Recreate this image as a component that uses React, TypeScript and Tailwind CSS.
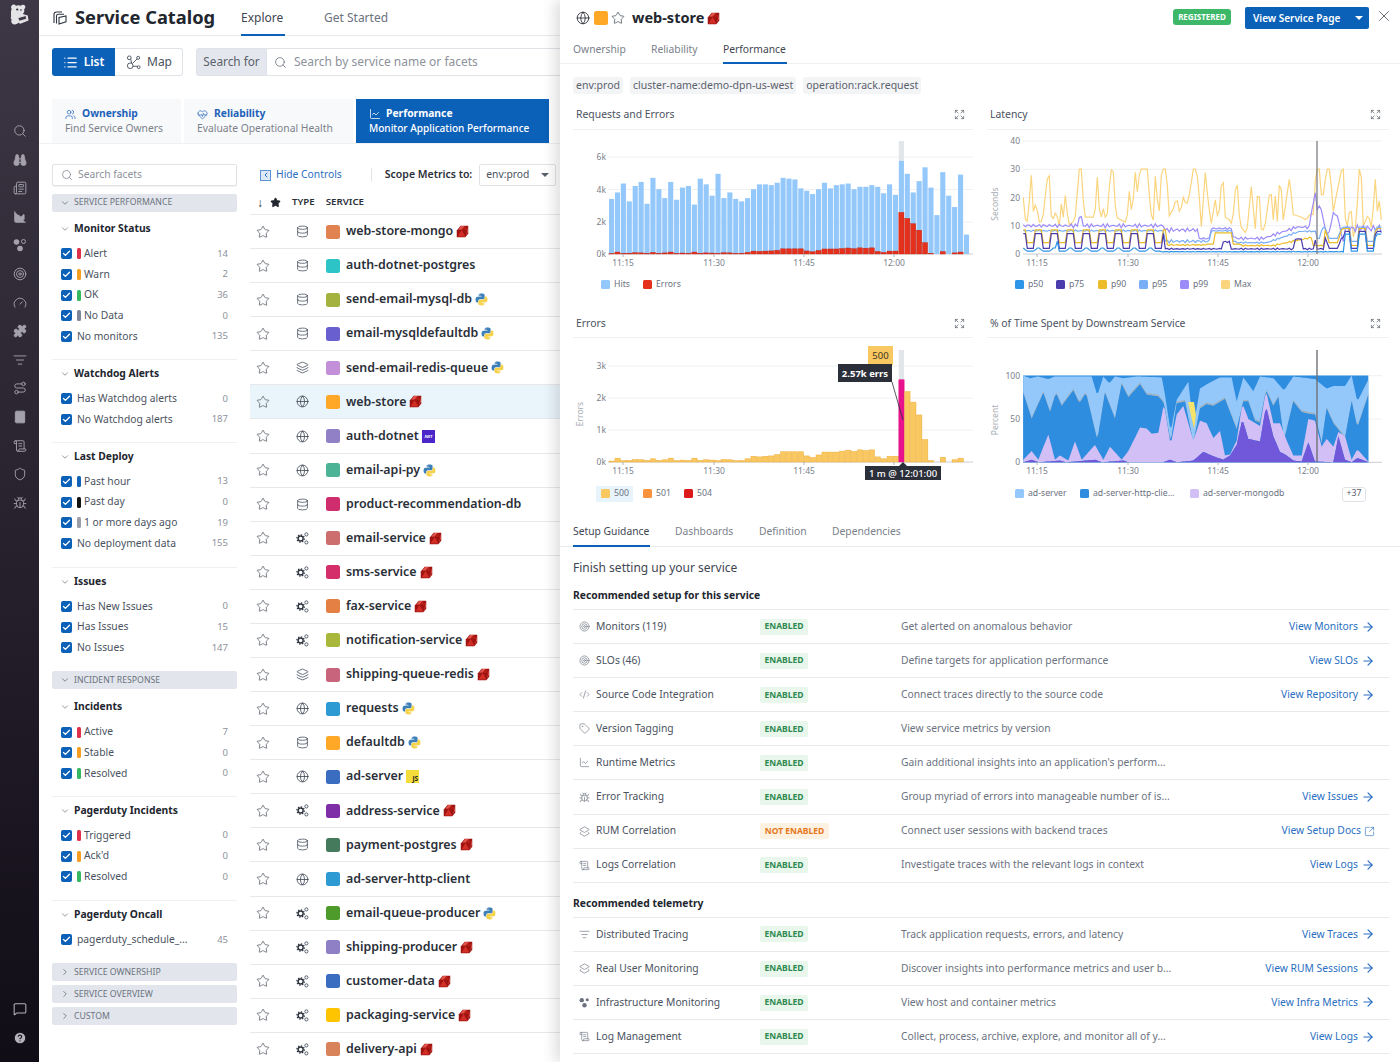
import React from "react";
import {
  Star, Database, Globe, Layers, Search, Check, ChevronDown, ChevronRight, List, ArrowRight,
  SquareArrowOutUpRight, X, Expand, Binoculars, ChartArea, Target, Gauge, Puzzle, ListFilter, Route,
  Book, Shield, Bug, MessageSquare, CircleHelp, ChartLine, CodeXml, Tag, Users, HeartPulse, Newspaper, ScrollText, Layers2,
} from "lucide-react";

const Ruby = () => (
  <svg viewBox="0 0 14 14" className="w-[13px] h-[13px] shrink-0">
    <polygon points="5,.8 13.200,.8 13.200,9.500 10,13.200 .8,13.200 .8,6" fill="#9f1410" />
    <polygon points="5.200,1.200 9.500,1.200 6.200,4.800 2.500,5.200" fill="#e0544c" />
    <polygon points="6.200,4.800 9.500,1.200 12.800,5.800" fill="#b51c16" />
    <polygon points="1.800,12.500 6,5.500 10,12.500" fill="#d22e26" />
    <polygon points="10.800,12 12.800,7 12.800,2" fill="#e46a62" opacity=".8" />
  </svg>
);
const Py = () => (
  <svg viewBox="0 0 24 24" className="w-[13px] h-[13px] shrink-0">
    <path fill="#3d7fb8" d="M11.9 1C6.5 1 6.8 3.4 6.8 3.4V6h5.3v.8H4.7S1 6.3 1 12s3.2 5.5 3.2 5.5h1.9v-2.7s-.1-3.2 3.2-3.2h5.4s3 0 3-3V4s.5-3-5.8-3zM9 2.7a1 1 0 110 2 1 1 0 010-2z" />
    <path fill="#f5d24a" transform="rotate(180 12 12)" d="M11.9 1C6.5 1 6.8 3.4 6.8 3.4V6h5.3v.8H4.7S1 6.3 1 12s3.2 5.5 3.2 5.5h1.9v-2.7s-.1-3.2 3.2-3.2h5.4s3 0 3-3V4s.5-3-5.8-3zM9 2.7a1 1 0 110 2 1 1 0 010-2z" />
  </svg>
);
const Js = () => (
  <span className="w-[13px] h-[13px] bg-[#f4dc3a] flex items-end justify-end pr-[1px] text-[6.5px] leading-[8px] font-bold text-[#222]">JS</span>
);
const Net = () => (
  <span className="w-[13px] h-[13px] bg-[#4b26c9] flex items-center justify-center text-[4px] leading-[5px] font-bold text-white">.NET</span>
);
const ServiceIcon = () => (
  <svg viewBox="0 0 14 14" className="w-[13px] h-[13px]" fill="none">
    <circle cx="5" cy="7" r="2.7" stroke="#2f3540" strokeWidth="1.5" />
    <circle cx="5" cy="7" r="4" stroke="#2f3540" strokeWidth="1.4" strokeDasharray="1.4 1.7" />
    <circle cx="11.2" cy="2.6" r="1.7" stroke="#4b5563" strokeWidth="1" />
    <circle cx="11.2" cy="11.2" r="1.7" stroke="#4b5563" strokeWidth="1" />
  </svg>
);
const TypeIcon = ({ t }: { t: string }) => {
  if (t === "db") return <Database className="w-[13px] h-[13px] text-[#4b5563]" strokeWidth={1.5} />;
  if (t === "web") return <Globe className="w-[13px] h-[13px] text-[#3f4652]" strokeWidth={1.5} />;
  if (t === "queue") return <Layers className="w-[13px] h-[13px] text-[#4b5563]" strokeWidth={1.5} />;
  return <ServiceIcon />;
};

const services: [string, string, string, string][] = [
  ["web-store-mongo", "ruby", "#e08350", "db"],
  ["auth-dotnet-postgres", "", "#2cc4c6", "db"],
  ["send-email-mysql-db", "py", "#a4b33f", "db"],
  ["email-mysqldefaultdb", "py", "#6a5fcf", "db"],
  ["send-email-redis-queue", "py", "#c28fd8", "queue"],
  ["web-store", "ruby", "#ffa726", "web"],
  ["auth-dotnet", "net", "#9180c5", "web"],
  ["email-api-py", "py", "#4cb396", "web"],
  ["product-recommendation-db", "", "#cf2d6d", "db"],
  ["email-service", "ruby", "#cc6e6e", "svc"],
  ["sms-service", "ruby", "#d42f6a", "svc"],
  ["fax-service", "ruby", "#e48044", "svc"],
  ["notification-service", "ruby", "#a9b73a", "svc"],
  ["shipping-queue-redis", "ruby", "#c8647c", "queue"],
  ["requests", "py", "#2e9ad4", "web"],
  ["defaultdb", "py", "#ffa726", "db"],
  ["ad-server", "js", "#3a6cbf", "web"],
  ["address-service", "ruby", "#7e2fa8", "svc"],
  ["payment-postgres", "ruby", "#467a5d", "db"],
  ["ad-server-http-client", "", "#2e9ad4", "web"],
  ["email-queue-producer", "py", "#4e9a2a", "svc"],
  ["shipping-producer", "ruby", "#8f7fc5", "svc"],
  ["customer-data", "ruby", "#3a6cbf", "svc"],
  ["packaging-service", "ruby", "#ffc400", "svc"],
  ["delivery-api", "ruby", "#d9835a", "svc"],
];

const Lang = ({ l }: { l: string }) =>
  l === "ruby" ? <Ruby /> : l === "py" ? <Py /> : l === "js" ? <Js /> : l === "net" ? <Net /> : null;

const R = "#e0314b", O = "#f59e1f", G = "#35b85f", S = "#7f8699", B = "#0f62b8", K = "#111", E = "#9a9ea6";
type F = [string, string, string | null];
const Cb = () => (
  <span className="w-[11px] h-[11px] rounded-[2px] bg-[#0b60b8] flex items-center justify-center shrink-0">
    <Check className="w-[9px] h-[9px] text-white" strokeWidth={3.5} />
  </span>
);
const FacetRow = ({ f }: { f: F }) => (
  <div className="h-[20.6px] flex items-center pl-[9px] pr-[9px]">
    <Cb />
    {f[2] ? (
      <span className="w-[3.5px] h-[11px] rounded-[1.5px] ml-[5px] mr-[3.5px] shrink-0" style={{ background: f[2] }} />
    ) : (
      <span className="w-[5px]" />
    )}
    <span className="text-[#4a5260]">{f[0]}</span>
    <span className="ml-auto text-[9.5px] text-[#8d929b]">{f[1]}</span>
  </div>
);
const Group = ({ title, rows, border = true, first = false, pb = "pb-[13px]", pt = "pt-[4px]" }: { title: string; rows: F[]; border?: boolean; first?: boolean; pb?: string; pt?: string }) => (
  <div className={`${first ? "pt-[7px]" : pt} ${border ? `${pb} border-b border-[#eef0f2]` : ""}`}>
    <div className="h-[20px] flex items-center pl-[8px] font-bold text-[#22262e]">
      <ChevronDown className="w-[10px] h-[10px] text-[#5b616c] mr-[4px]" strokeWidth={1.5} />
      {title}
    </div>
    <div className="mt-[4.7px]">
      {rows.map((r) => (
        <FacetRow key={r[0]} f={r} />
      ))}
    </div>
  </div>
);
const SecBar = ({ title, open, cls = "" }: { title: string; open?: boolean; cls?: string }) => (
  <div className={`h-[18px] rounded-[2px] bg-[#e2e6ec] flex items-center pl-[8px] text-[8.7px] text-[#6b7280] ${cls}`}>
    {open ? (
      <ChevronDown className="w-[10px] h-[10px] mr-[4px] text-[#6b7280]" />
    ) : (
      <ChevronRight className="w-[10px] h-[10px] mr-[4px] text-[#6b7280]" />
    )}
    {title}
  </div>
);

const Facets = () => (
  <div className="w-[185px] shrink-0 pt-[20px] text-[10.3px]">
    <div className="h-[22px] rounded-[2px] border border-[#dfe2e7] flex items-center pl-[8px] text-[#8d929b] shadow-[0_1px_1px_rgba(0,0,0,0.05)]">
      <Search className="w-[12px] h-[12px] mr-[5px] text-[#7c828c]" strokeWidth={1.5} />
      Search facets
    </div>
    <SecBar title="SERVICE PERFORMANCE" open cls="mt-[8px]" />
    <Group first title="Monitor Status" pb="pb-[12px]" rows={[["Alert", "14", R], ["Warn", "2", O], ["OK", "36", G], ["No Data", "0", S], ["No monitors", "135", null]]} />
    <Group title="Watchdog Alerts" pb="pb-[12px]" rows={[["Has Watchdog alerts", "0", null], ["No Watchdog alerts", "187", null]]} />
    <Group title="Last Deploy" rows={[["Past hour", "13", B], ["Past day", "0", K], ["1 or more days ago", "19", E], ["No deployment data", "155", null]]} />
    <Group title="Issues" border={false} rows={[["Has New Issues", "0", null], ["Has Issues", "15", null], ["No Issues", "147", null]]} />
    <SecBar title="INCIDENT RESPONSE" open cls="mt-[13px]" />
    <Group title="Incidents" pt="pt-[8px]" pb="pb-[12px]" rows={[["Active", "7", R], ["Stable", "0", O], ["Resolved", "0", G]]} />
    <Group title="Pagerduty Incidents" rows={[["Triggered", "0", R], ["Ack'd", "0", O], ["Resolved ", "0", G]]} />
    <Group title="Pagerduty Oncall" border={false} rows={[["pagerduty_schedule_...", "45", null]]} />
    <SecBar title="SERVICE OWNERSHIP" cls="mt-[13px]" />
    <SecBar title="SERVICE OVERVIEW" cls="mt-[4px]" />
    <SecBar title="CUSTOM" cls="mt-[4px]" />
  </div>
);

const Table = () => (
  <div className="flex-1 pt-[20px] min-w-0">
    <div className="h-[22px] flex items-center text-[10.3px] pl-[10px] whitespace-nowrap">
      <span className="w-[11px] h-[11px] border border-[#5b93d6] bg-[#dce9f7] flex items-center justify-center mr-[5px] shrink-0">
        <ChevronRight className="w-[8px] h-[8px] rotate-180 text-[#2a6fc2]" strokeWidth={3} />
      </span>
      <span className="text-[#2a6fc2]">Hide Controls</span>
      <span className="w-px h-[14px] bg-[#e2e5ea] ml-[29px] mr-[13px] shrink-0" />
      <span className="font-semibold text-[#2a2f38] text-[10.5px]">Scope Metrics to:</span>
      <span className="ml-[7px] w-[77px] h-[22px] rounded-[2px] border border-[#dfe2e7] flex items-center pl-[6px] text-[#4a5260] shrink-0">
        env:prod
        <span className="ml-auto mr-[6px] w-0 h-0 border-x-[4px] border-x-transparent border-t-[4px] border-t-[#5b616c]" />
      </span>
    </div>
    <div className="h-[29px] pt-[5px] flex items-center text-[9.7px] font-semibold text-[#2a2f38] pl-[7px] border-b border-[#e6e8eb]">
      <span className="w-[11px] text-[12px] leading-none">↓</span>
      <Star className="w-[11px] h-[11px] fill-[#22262e] text-[#22262e] ml-[2px]" />
      <span className="ml-[11px]">TYPE</span>
      <span className="ml-[11px]">SERVICE</span>
    </div>
    <div>
      {services.map((s, i) => (
        <div key={s[0]} className={`h-[34.08px] flex items-center border-b border-[#e6e8eb] ${i === 5 ? "bg-[#eaf5fb]" : ""}`}>
          <Star className="w-[14px] h-[14px] ml-[6px] text-[#555b66] shrink-0" strokeWidth={1.3} />
          <span className="w-[13px] ml-[26px] flex justify-center shrink-0">
            <TypeIcon t={s[3]} />
          </span>
          <span className="w-[14px] h-[14px] rounded-[2.5px] ml-[17px] shrink-0" style={{ background: s[2] }} />
          <span className="ml-[6px] text-[12.4px] font-semibold text-[#2a2f38] whitespace-nowrap">{s[0]}</span>
          <span className="ml-[3px]">
            <Lang l={s[1]} />
          </span>
        </div>
      ))}
    </div>
  </div>
);

const Tile = ({ icon, t, d, active, w }: { icon: React.ReactNode; t: string; d: string; active?: boolean; w: string }) => (
  <div className={`${w} h-[44px] pl-[13px] flex flex-col justify-center text-[10.3px] leading-[15px] whitespace-nowrap ${active ? "bg-[#0b60b8] text-white" : "bg-[#f8f9fa]"}`}>
    <div className={`flex items-center font-bold ${active ? "text-white" : "text-[#1c62b9]"}`}>
      <span className="w-[17px] flex">{icon}</span>
      {t}
    </div>
    <div className={active ? "font-medium text-[10.05px]" : "text-[#7b818b]"}>{d}</div>
  </div>
);

const Main = () => (
  <div className="flex-1 min-w-0">
    <div className="h-[36px] border-b border-[#e8eaed] flex items-stretch pl-[13px]">
      <div className="flex items-center w-[189px]">
        <svg viewBox="0 0 16 16" className="w-[16px] h-[16px] mr-[7px]" fill="none" stroke="#2f3540" strokeWidth="1.1">
          <path d="M2 13V4.5C2 3 3 2 4.5 2H10M4.5 13.5V6C4.5 5 5.2 4.2 6.2 4.2H12" />
          <path d="M7 14V7.5L14 6V11.8Z" />
        </svg>
        <span className="text-[18.3px] font-bold text-[#22262e] leading-none whitespace-nowrap">Service Catalog</span>
      </div>
      <div className="w-[83px] relative flex items-center text-[12px] text-[#3f4652]">
        Explore
        <span className="absolute left-0 bottom-[-1px] h-[2px] w-[44px] bg-[#0b60b8]" />
      </div>
      <div className="flex items-center text-[12px] text-[#6b7280]">Get Started</div>
    </div>
    <div className="mt-[12px] ml-[13px] h-[28px] flex">
      <div className="w-[63px] bg-[#0b60b8] rounded-l-[3px] flex items-center justify-center text-white text-[12px] font-semibold">
        <List className="w-[15px] h-[15px] mr-[6px]" strokeWidth={2} />
        List
      </div>
      <div className="w-[68px] border border-l-0 border-[#dfe2e7] rounded-r-[3px] flex items-center pl-[11px] text-[#4a5260] text-[12px]">
        <svg viewBox="0 0 16 16" className="w-[15px] h-[15px] mr-[6px]" fill="none" stroke="#4a5260" strokeWidth="1">
          <circle cx="3.5" cy="3" r="2" />
          <circle cx="4.5" cy="11.5" r="3" />
          <circle cx="13" cy="3" r="1.6" />
          <circle cx="13.5" cy="13" r="1.5" />
          <path d="M5 4.5l1 4M7 9l5-5M7.5 12h4.5" />
        </svg>
        Map
      </div>
      <div className="ml-[13px] w-[71px] bg-[#e4e8ee] border border-[#dfe2e7] rounded-l-[3px] flex items-center justify-center text-[11.8px] text-[#5b616c]">
        Search for
      </div>
      <div className="flex-1 border-y border-[#dfe2e7] flex items-center pl-[7px] text-[12px] text-[#8d929b] whitespace-nowrap overflow-hidden">
        <Search className="w-[13px] h-[13px] mr-[7px] text-[#6b7280]" strokeWidth={1.5} />
        Search by service name or facets
      </div>
    </div>
    <div className="mt-[23px] pl-[13px] flex gap-[3px] h-[45px] border-b border-[#f0f1f3]">
      <Tile w="w-[129px]" t="Ownership" d="Find Service Owners" icon={<Users className="w-[11px] h-[11px] mt-[1px]" strokeWidth={1.5} />} />
      <Tile w="w-[169px]" t="Reliability" d="Evaluate Operational Health" icon={<HeartPulse className="w-[11px] h-[11px] mt-[1px]" strokeWidth={1.5} />} />
      <Tile active w="w-[193px]" t="Performance" d="Monitor Application Performance" icon={<ChartLine className="w-[12px] h-[12px]" strokeWidth={1.5} />} />
    </div>
    <div className="flex pl-[13px] gap-[13px]">
      <Facets />
      <Table />
    </div>
  </div>
);

const sideTop = [Search, Binoculars, Newspaper, ChartArea, null, Target, Gauge, Puzzle, ListFilter, Route, Book, ScrollText, Shield, Bug];
const fillSet = new Set<unknown>([Binoculars, ChartArea, Puzzle, Book]);
const Side = () => (
  <div className="w-[39px] h-full shrink-0 bg-linear-to-b from-[#3e3846] to-[#110d17] flex flex-col items-center pb-[10px]">
    <div className="h-[116.7px] w-full pt-[3px] flex justify-center shrink-0">
      <svg viewBox="0 0 24 26" className="w-[22px] h-[24px]">
        <path fill="#e4e4e6" d="M3 2.500c1.500-1.500 3.500-1 4.500.5 2-.8 4-.8 5.500 0 1-1.500 3.500-1.500 4.500 0 .8 1.500 0 3-1 3.800.5 2 0 4-1.500 5.200l5.500 1.500.8 5.500-9 3.500-2-1c-2 2-5 2.500-6.500 1-1.500-1-1.800-3-.8-4.500-1-.8-1.500-2.500-.7-3.500C2 11 2 8 3 6.500 2 5 2 3.500 3 2.500z" />
        <circle cx="9" cy="7" r="1.200" fill="#2a2530" />
        <circle cx="13" cy="7.500" r=".9" fill="#2a2530" />
        <path d="M9.500 16l9-2.500.7 4-8 2.300z" fill="#3e3846" stroke="#e4e4e6" />
      </svg>
    </div>
    {sideTop.map((I, i) => (
      <div key={i} className="h-[28.6px] flex items-center justify-center text-[#a5a1ac] shrink-0">
        {I ? (
          <I className={`w-[14px] h-[14px] ${fillSet.has(I) ? "fill-current" : ""}`} strokeWidth={1.6} />
        ) : (
          <svg viewBox="0 0 14 14" className="w-[14px] h-[14px] fill-current">
            <circle cx="3.500" cy="4" r="2.800" />
            <circle cx="10.500" cy="3.500" r="2" fill="none" stroke="currentColor" />
            <circle cx="7" cy="10.500" r="2.800" />
          </svg>
        )}
      </div>
    ))}
    <div className="mt-auto h-[28.6px] flex items-center justify-center text-[#b5b2ba]">
      <MessageSquare className="w-[14px] h-[14px]" strokeWidth={1.8} />
    </div>
    <div className="h-[28.6px] flex items-center justify-center text-[#b5b2ba]">
      <CircleHelp className="w-[14px] h-[14px] fill-current stroke-[#1a1520]" strokeWidth={2} />
    </div>
  </div>
);

/* ---------- charts ---------- */
const hits = [3.4,3.8,4.35,3.25,4.2,4.45,3.1,4.7,4,3.45,4.45,3.35,4.1,4.2,3.05,4.65,4.3,3.6,4.95,3.45,3.8,3.4,3.25,3.45,4,4.3,4.3,4.25,4.4,4.7,4.65,4.6,4.05,3.9,3.7,4,4.4,4.05,4.25,4.3,4.35,4,4.15,4.15,4.25,4.15,3.75,4.3,3.65,5.75,4.95,3.8,4.5,5.35,4.1,2.4,5.05,3.6,2.9,4.9,1.2];
const errs = [.03,.12,.04,.05,.08,.07,.05,.1,.05,.07,.12,.04,.06,.05,.12,.05,.07,.06,.04,.08,.07,.04,.05,.1,.18,.16,.18,.19,.23,.32,.32,.32,.32,.19,.14,.22,.31,.31,.31,.34,.37,.33,.38,.36,.38,.16,.1,.18,.18,2.57,2.2,1.87,1.47,.7,.04,0,.15,0,.07,.12,0];
const X0 = 36, STEP = 5.915;
const txt = "#7a808a";

const lerp = (pts: number[][], x: number) => {
  if (x <= pts[0][0]) return pts[0][1];
  for (let i = 1; i < pts.length; i++) {
    if (x <= pts[i][0]) {
      const [a, b] = pts[i - 1], [c, d] = pts[i];
      return b + ((d - b) * (x - a)) / (c - a);
    }
  }
  return pts[pts.length - 1][1];
};
const Ticks = ({ y, xs, hideLast }: { y: number; xs: number[]; hideLast?: boolean }) => (
  <>
    {xs.map((x, i) => (
      <g key={i}>
        <line x1={x} x2={x} y1={y} y2={y + 3} stroke="#aeb3ba" />
        {!(hideLast && i === 3) && (
          <text x={x} y={y + 12} textAnchor="middle" fontSize="8.5" fill={txt}>{["11:15", "11:30", "11:45", "12:00"][i]}</text>
        )}
      </g>
    ))}
  </>
);
const Grid = ({ ys, labels, x1, x2 = 400, ax }: { ys: number[]; labels: string[]; x1: number; x2?: number; ax: number }) => (
  <>
    {ys.map((y, i) => (
      <g key={i}>
        <line x1={x1} x2={x2} y1={y} y2={y} stroke={i === ys.length - 1 ? "#c9cdd3" : "#eef0f2"} />
        <text x={ax} y={y + 3} textAnchor="end" fontSize="8.5" fill={txt}>{labels[i]}</text>
      </g>
    ))}
  </>
);
const ChartReq = () => (
  <svg viewBox="0 0 400 145" className="w-[400px] h-[145px] block">
    <Grid ys={[27, 59.5, 92, 124]} labels={["6k", "4k", "2k", "0k"]} x1={35} ax={33} />
    <rect x={X0 + 49 * STEP} y={11} width={STEP - .8} height={113 - 5.75 * 16.2} fill="#e2e5ea" />
    {hits.map((h, i) => (
      <rect key={i} x={X0 + i * STEP} y={124 - h * 16.2} width={STEP - .8} height={h * 16.2} fill="#94c8fb" />
    ))}
    {errs.map((h, i) => (
      <rect key={i} x={X0 + i * STEP} y={124 - h * 16.2} width={STEP - .8} height={h * 16.2} fill="#e5301b" stroke="#c42312" strokeWidth=".4" />
    ))}
    <Ticks y={124} xs={[50, 141, 231, 321]} />
  </svg>
);
const ChartErr = () => (
  <svg viewBox="0 0 400 145" className="w-[400px] h-[145px] block">
    <text transform="translate(10,76) rotate(-90)" textAnchor="middle" fontSize="8.5" fill="#a8acb3">Errors</text>
    <Grid ys={[28, 60, 92, 124]} labels={["3k", "2k", "1k", "0k"]} x1={35} ax={33} />
    <rect x={X0 + 49 * STEP} y={12} width={STEP - .8} height={30} fill="#e2e5ea" />
    {errs.map((h, i) => (
      <rect key={i} x={X0 + i * STEP} y={124 - h * 32} width={STEP - .6} height={h * 32} fill={i === 49 ? "#e8128c" : "#f9c860"} stroke={i === 49 ? "#e8128c" : "#eeae3c"} strokeWidth=".5" />
    ))}
    <Ticks y={124} xs={[50, 141, 231, 321]} hideLast />
    <rect x={295} y={8} width={25} height={19} fill="#f9c860" />
    <text x={307.5} y={21} textAnchor="middle" fontSize="9.500" fill="#3a3320">500</text>
    <rect x={265} y={26} width={54} height={18} fill="#2b2f3a" />
    <text x={292} y={38.500} textAnchor="middle" fontSize="9.500" fontWeight="700" fill="#fff">2.57k errs</text>
    <line x1={319} y1={44} x2={330} y2={82} stroke="#2b2f3a" strokeWidth=".8" />
    <polygon points="326,128 330,124 334,128" fill="#2b2f3a" />
    <rect x={292} y={128} width={76} height={14} fill="#2b2f3a" />
    <text x={330} y={138.500} textAnchor="middle" fontSize="9.500" fontWeight="500" fill="#fff">1 m @ 12:01:00</text>
  </svg>
);
const maxPts = [[130,20],[137,11],[145,12],[153,30],[160,15],[168,18],[180,10],[190,14],[200,25],[207,30],[215,11],[228,15],[238,10],[245,19],[250,13],[257,22],[265,10],[285,12],[298,30],[306,30],[312,13],[340,13],[346,16],[353,29],[360,11],[370,16],[380,11],[392,30],[400,29],[408,13],[440,11],[450,25],[456,11],[465,30],[472,22],[480,30],[505,30],[510,15],[520,12],[527,30],[536,11],[545,30],[560,30],[566,13],[580,16],[590,20],[600,14],[610,20],[620,17],[630,22],[640,30],[650,30],[658,20],[665,8],[675,30],[685,18],[695,10],[705,20],[715,11],[728,30],[735,13],[750,12],[757,10],[770,28],[780,10],[800,7],[815,25],[825,7],[835,26],[845,7],[855,10],[872,24],[880,12],[885,22],[893,10],[900,30],[910,12],[920,20],[930,28],[938,14],[965,13],[978,12],[990,14],[1000,14],[1008,30],[1018,30],[1022,21],[1030,21],[1040,30],[1050,30],[1060,15],[1068,20],[1085,30],[1090,30],[1098,7],[1105,12],[1112,18],[1120,6],[1128,10],[1138,30],[1143,30],[1150,10],[1165,14],[1177,8],[1185,30],[1190,12],[1196,21],[1204,12]];
const LZ = (z: number) => z / 3 - 7;
const LY = (v: number) => 124 - v * 2.83;
const sq = (x: number, lo: number, hi: number, p = 48, off = 115) => {
  const s = Math.sin(((x - off) / p) * 2 * Math.PI);
  const c = Math.max(0, Math.min(1, s * 2.5 + 0.5));
  return lo + (hi - lo) * c;
};
const jit = (x: number, a: number) => Math.sin(x * 1.7) * a * 0.6 + Math.sin(x * 0.53) * a * 0.4;
const p50Fn = (x: number) => {
  if (x > 1090) return 1 + sq(x, 0, 6, 50, 1085);
  if (x > 540) return 0.8 + jit(x, 0.15);
  return 1 + Math.max(0, Math.sin((x - 115) / 48 * 6.283)) * 1.2 + (Math.abs(x - 232) < 6 ? 3 : 0);
};
const p75Fn = (x: number) => {
  if (x > 1090) return sq(x, 2, 8, 50, 1085);
  if (x > 1030) return 2 + Math.max(0, Math.sin(x / 9)) * 4;
  if (x > 550) return 1.8 + jit(x, 0.3) + (Math.abs(x - 740) < 12 ? 2.5 : 0) + (Math.abs(x - 955) < 10 ? 3.5 : 0) + (Math.abs(x - 1005) < 4 ? 3 : 0);
  return sq(x, 2, 7.2);
};
const p90Fn = (x: number) => {
  if (x > 1090) return sq(x, 3, 9, 50, 1085);
  if (x > 1030) return 4 + Math.max(0, Math.sin(x / 9)) * 5;
  if (x > 780) return 3 + (x > 880 ? (x - 880) / 40 : 0) * (x < 1000 ? 1 : 0) + jit(x, 0.3);
  if (x > 680) return x > 700 && x < 760 ? 7.5 : 3.5;
  if (x > 560) return 3.2 + jit(x, 0.3);
  return sq(x, 4, 8.5);
};
const p95Fn = (x: number) => {
  if (x > 1090) return sq(x, 4.5, 9.5, 50, 1085);
  if (x > 1010) return 5.5 + Math.max(0, Math.sin(x / 9)) * 4;
  if (x > 770) return 4 + Math.min(4, Math.max(0, (x - 860) / 25)) + jit(x, 0.3);
  if (x > 690) return x < 760 ? 8.2 + jit(x, 0.3) : 4.5;
  if (x > 555) return 4.5 + jit(x, 0.8);
  return 8.2 + jit(x, 0.4);
};
const p99Fn = (x: number) => {
  if (x > 1090) return 9 + jit(x, 2) ;
  if (x > 990) return x < 1012 ? 12 + (x - 990) * .6 : 12 + Math.sin(x / 8) * 5 - (x > 1060 ? 3 : 0);
  if (x > 770) return 5.5 + Math.min(4, Math.max(0, (x - 850) / 25)) + jit(x, 0.6);
  if (x > 690) return x < 760 ? 9 + jit(x, 0.4) : 6;
  if (x > 655) return 5.5 + jit(x, .4);
  if (x > 555) return 8.5 + jit(x, 1);
  return 10 + jit(x, 0.8) + (Math.abs(x - 300) < 5 ? 3 : 0);
};
const linePath = (fn: (x: number) => number) => {
  let d = "";
  for (let x = 130; x <= 1204; x += 6) d += `${d ? "L" : "M"}${LZ(x).toFixed(1)} ${LY(fn(x)).toFixed(1)}`;
  return d;
};
const ChartLat = () => (
  <svg viewBox="0 0 402 145" className="w-[402px] h-[145px] block">
    <text transform="translate(11,74) rotate(-90)" textAnchor="middle" fontSize="8.500" fill="#a8acb3">Seconds</text>
    <Grid ys={[11, 39.300, 67.600, 95.700, 124]} labels={["40", "30", "20", "10", "0"]} x1={36} x2={395} ax={33} />
    <path d={linePath((x) => lerp(maxPts, x))} fill="none" stroke="#fbd57e" strokeWidth="1.200" />
    <path d={linePath(p99Fn)} fill="none" stroke="#9b8cf8" strokeWidth="1.200" />
    <path d={linePath(p95Fn)} fill="none" stroke="#78aef5" strokeWidth="1.200" />
    <path d={linePath(p90Fn)} fill="none" stroke="#ecbc2b" strokeWidth="1.200" />
    <path d={linePath(p75Fn)} fill="none" stroke="#4b3cae" strokeWidth="1.200" />
    <path d={linePath(p50Fn)} fill="none" stroke="#2c95e8" strokeWidth="1.200" />
    <line x1={330} x2={330} y1={11} y2={124} stroke="#7d7f84" strokeWidth="1.300" />
    <Ticks y={124} xs={[50, 141, 231, 321]} />
  </svg>
);
const b1 = [[130,0],[155,3],[175,0],[240,2],[260,0],[345,3],[365,0],[430,2],[445,0],[550,0],[570,3],[590,0],[640,2],[670,12],[700,7],[730,3],[750,8],[770,20],[787,50],[805,27],[840,24],[858,65],[880,30],[900,12],[920,8],[940,2],[965,1],[985,23],[1005,1],[1060,0],[1075,30],[1095,3],[1115,0],[1132,5],[1167,0]];
const b2 = [[130,3],[155,13],[175,3],[205,32],[225,3],[240,8],[265,2],[285,24],[305,3],[345,20],[370,3],[390,18],[425,3],[445,13],[480,40],[500,39],[515,33],[535,34],[552,68],[572,20],[590,55],[610,65],[640,25],[660,48],[680,45],[700,28],[720,36],[735,8],[750,9],[770,25],[787,68],[805,50],[840,42],[858,83],[880,45],[900,45],[920,25],[940,8],[965,8],[985,50],[1005,48],[1025,18],[1040,27],[1060,18],[1075,35],[1095,30],[1115,3],[1132,15],[1167,0]];
const b3 = [[130,80],[155,50],[190,80],[210,58],[228,80],[245,65],[280,83],[298,68],[318,80],[352,25],[375,80],[405,50],[425,90],[445,75],[480,90],[500,78],[535,76],[552,68],[572,22],[590,68],[615,70],[640,22],[660,62],[680,67],[700,65],[735,73],[770,38],[790,70],[805,70],[825,48],[840,46],[858,83],[880,65],[895,75],[912,25],[940,70],[965,58],[985,56],[1005,55],[1025,22],[1040,62],[1060,45],[1095,28],[1115,70],[1132,40],[1167,80]];
const b5 = [[130,100],[150,97],[175,99],[205,96],[225,99],[335,99],[352,77],[370,99],[388,91],[405,99],[430,97],[470,99],[545,98],[552,85],[572,35],[590,72],[625,93],[640,40],[660,85],[680,90],[720,98],[755,98],[770,70],[790,98],[820,82],[840,99],[880,97],[912,83],[940,99],[985,97],[1005,96],[1040,85],[1060,88],[1095,88],[1115,100],[1132,70],[1167,97]];
const AX = (z: number) => z / 3 - 7;
const AY = (p: number) => 124.300 - p * 0.8667;
const area = (top: (x: number) => number, bottom: (x: number) => number) => {
  const xs: number[] = [];
  for (let x = 130; x <= 1167; x += 5) xs.push(x);
  const a = xs.map((x) => `${AX(x).toFixed(1)} ${AY(top(x)).toFixed(1)}`);
  const c = xs.slice().reverse().map((x) => `${AX(x).toFixed(1)} ${AY(bottom(x)).toFixed(1)}`);
  return "M" + a.join("L") + "L" + c.join("L") + "Z";
};
const Fb = (p: number[][]) => (x: number) => lerp(p, x);
const ChartPct = () => (
  <svg viewBox="0 0 402 145" className="w-[402px] h-[145px] block">
    <text transform="translate(11,82) rotate(-90)" textAnchor="middle" fontSize="8.500" fill="#a8acb3">Percent</text>
    <Grid ys={[37.700, 81, 124.300]} labels={["100", "50", "0"]} x1={36} x2={395} ax={33} />
    <path d={area(() => 100, () => 0)} fill="#2f8de0" />
    <path d={area(Fb(b5), Fb(b3))} fill="#94c8fb" />
    <path d={area((x) => Math.min(lerp(b5, x), lerp(b3, x) + 2), Fb(b3))} fill="#9fb0bf" />
    <path d={area(Fb(b3), () => 0)} fill="#2f8de0" />
    <path d={area(Fb(b2), Fb(b1))} fill="#d2bff6" />
    <path d={area(Fb(b1), () => 0)} fill="#7157d9" />
    <polygon points="201,64 207,91 209,77 207,64" fill="#f5e36a" />
    <line x1={330} x2={330} y1={12} y2={124} stroke="#6f7177" strokeWidth="1.400" />
    <Ticks y={124} xs={[50, 141, 231, 321]} />
  </svg>
);

const Leg = ({ c, t, cls = "" }: { c: string; t: string; cls?: string }) => (
  <span className={`flex items-center text-[#6b7280] whitespace-nowrap ${cls}`}>
    <span className="w-[9px] h-[9px] rounded-[1.5px] mr-[4px] shrink-0" style={{ background: c }} />
    {t}
  </span>
);
const Chart = ({ title, children, legend, low }: { title: string; children: React.ReactNode; legend: React.ReactNode; low?: boolean }) => (
  <div className="h-[208px]">
    <div className={`h-[30px] border-b border-[#eef0f2] flex items-center justify-between pl-[3px] pr-[8px] text-[10.4px] text-[#4a5260] ${low ? "pt-[2px]" : ""}`}>
      {title}
      <Expand className="w-[11px] h-[11px] text-[#5b616c]" strokeWidth={1.5} />
    </div>
    {children}
    <div className={`h-[20px] flex items-center pl-[28px] text-[8.7px] ${low ? "pt-[2px]" : ""}`}>{legend}</div>
  </div>
);

const Ptab = ({ t, active, w }: { t: string; active?: boolean; w: string }) => (
  <div className={`relative ${w} flex items-center text-[10.3px] whitespace-nowrap ${active ? "text-[#3f4652]" : "text-[#7b818b]"}`}>
    {t}
    {active && <span className="absolute left-0 bottom-[-1px] h-[2px] w-full bg-[#0b60b8]" />}
  </div>
);
type SRow = [React.ReactNode, string, boolean, string, string, boolean?];
const ic = "w-[11px] h-[11px] text-[#6b7280]";
const monIcon = <Target className={ic} strokeWidth={1.4} />;
const logsIcon = <ScrollText className={ic} strokeWidth={1.4} />;
const rumIcon = <Layers2 className={ic} strokeWidth={1.4} />;
const setup: SRow[] = [
  [monIcon, "Monitors (119)", true, "Get alerted on anomalous behavior", "View Monitors"],
  [<Target className={ic} strokeWidth={1.4} />, "SLOs (46)", true, "Define targets for application performance", "View SLOs"],
  [<CodeXml className={ic} strokeWidth={1.4} />, "Source Code Integration", true, "Connect traces directly to the source code", "View Repository"],
  [<Tag className={ic} strokeWidth={1.4} />, "Version Tagging", true, "View service metrics by version", ""],
  [<ChartLine className={ic} strokeWidth={1.4} />, "Runtime Metrics", true, "Gain additional insights into an application's perform...", ""],
  [<Bug className={ic} strokeWidth={1.4} />, "Error Tracking", true, "Group myriad of errors into manageable number of is...", "View Issues"],
  [rumIcon, "RUM Correlation", false, "Connect user sessions with backend traces", "View Setup Docs", true],
  [logsIcon, "Logs Correlation", true, "Investigate traces with the relevant logs in context", "View Logs"],
];
const telem: SRow[] = [
  [<ListFilter className={ic} strokeWidth={1.4} />, "Distributed Tracing", true, "Track application requests, errors, and latency", "View Traces"],
  [rumIcon, "Real User Monitoring", true, "Discover insights into performance metrics and user b...", "View RUM Sessions"],
  [<svg viewBox="0 0 14 14" className="w-[11px] h-[11px] fill-[#6b7280]"><circle cx="3.500" cy="4" r="2.800" /><circle cx="10.500" cy="3.500" r="2" /><circle cx="7" cy="10.500" r="2.800" /></svg>, "Infrastructure Monitoring", true, "View host and container metrics", "View Infra Metrics"],
  [logsIcon, "Log Management", true, "Collect, process, archive, explore, and monitor all of y...", "View Logs"],
];
const SetupRow = ({ r }: { r: SRow }) => (
  <div className="h-[34.1px] grid grid-cols-[187px_141px_1fr] items-center border-b border-[#e8eaed] text-[10.3px]">
    <div className="flex items-center pl-[6px] text-[#4a5260]">
      <span className="w-[17px] flex">{r[0]}</span>
      {r[1]}
    </div>
    <div>
      {r[2] ? (
        <span className="inline-flex items-center justify-center h-[16px] w-[48px] rounded-[2px] bg-[#e8f6ec] text-[#2f8a50] text-[8.500px] font-bold">ENABLED</span>
      ) : (
        <span className="inline-flex items-center justify-center h-[16px] w-[69px] rounded-[2px] bg-[#fdf1e2] text-[#e5781b] text-[8.500px] font-bold">NOT ENABLED</span>
      )}
    </div>
    <div className="flex items-center pr-[14px]">
      <span className="text-[#6b7280] whitespace-nowrap">{r[3]}</span>
      {r[4] && (
        <span className="ml-auto flex items-center text-[#2a6fc2] whitespace-nowrap">
          {r[4]}
          {r[5] ? (
            <SquareArrowOutUpRight className="w-[11px] h-[11px] ml-[3px]" strokeWidth={1.4} />
          ) : (
            <ArrowRight className="w-[14px] h-[14px] ml-[3px]" strokeWidth={2} />
          )}
        </span>
      )}
    </div>
  </div>
);

const Panel = () => (
  <div className="absolute left-[560px] top-0 w-[840px] h-full bg-white shadow-[-6px_0_12px_rgba(0,0,0,0.12)] pl-[13px] pr-[11px] overflow-hidden">
    <div className="h-[36px] flex items-center -mr-[11px] pl-[3px]">
      <Globe className="w-[14px] h-[14px] text-[#22262e] mr-[4px] shrink-0" strokeWidth={1.4} />
      <span className="w-[14px] h-[14px] rounded-[2.500px] bg-[#ffa726] mr-[3px]" />
      <Star className="w-[14px] h-[14px] text-[#4a5260] mr-[7px]" strokeWidth={1.3} />
      <span className="text-[14.500px] font-bold text-[#22262e] mr-[3px]">web-store</span>
      <Ruby />
      <span className="ml-auto h-[16px] w-[58px] rounded-[3px] bg-[#3cb868] text-white text-[8px] font-bold flex items-center justify-center mb-[2px]">REGISTERED</span>
      <span className="ml-[14px] w-[124px] h-[22px] rounded-[2px] bg-[#0b60b8] text-white text-[10px] font-semibold flex items-center pl-[8px] whitespace-nowrap">
        View Service Page
        <span className="ml-auto mr-[6px] w-0 h-0 border-x-[4px] border-x-transparent border-t-[4px] border-t-white" />
      </span>
      <X className="w-[18px] h-[18px] text-[#555b66] ml-[6px] mr-[7px] mb-[4px]" strokeWidth={1.2} />
    </div>
    <div className="h-[28px] -ml-[13px] -mr-[11px] pl-[13px] flex border-b border-[#eef0f2]">
      <Ptab t="Ownership" w="w-[78px]" />
      <Ptab t="Reliability" w="w-[72px]" />
      <Ptab t="Performance" active w="w-[64px]" />
    </div>
    <div className="h-[36px] flex items-center gap-[7px] text-[10.500px] text-[#5b616c] pt-[10px] pb-[3px]">
      <span className="h-[17px] px-[3px] rounded-[3px] bg-[#f3f4f6] flex items-center">env:prod</span>
      <span className="h-[17px] px-[3px] rounded-[3px] bg-[#f3f4f6] flex items-center">cluster-name:demo-dpn-us-west</span>
      <span className="h-[17px] px-[3px] rounded-[3px] bg-[#f3f4f6] flex items-center">operation:rack.request</span>
    </div>
    <div className="grid grid-cols-[400px_402px] gap-x-[14px]">
      <Chart title="Requests and Errors" legend={<><Leg c="#94c8fb" t="Hits" cls="w-[42px]" /><Leg c="#e5301b" t="Errors" /></>}>
        <ChartReq />
      </Chart>
      <Chart title="Latency" legend={<><Leg c="#2c95e8" t="p50" cls="w-[41px]" /><Leg c="#4b3cae" t="p75" cls="w-[42px]" /><Leg c="#ecbc2b" t="p90" cls="w-[41px]" /><Leg c="#78aef5" t="p95" cls="w-[41px]" /><Leg c="#9b8cf8" t="p99" cls="w-[41px]" /><Leg c="#fbd57e" t="Max" /></>}>
        <ChartLat />
      </Chart>
      <Chart low title="Errors" legend={<><span className="h-[16px] w-[37px] -ml-[5px] pl-[5px] mr-[10px] bg-[#e8f4fc] flex items-center"><Leg c="#f9c860" t="500" /></span><Leg c="#fb923c" t="501" cls="w-[41px]" /><Leg c="#dd1a1a" t="504" /></>}>
        <ChartErr />
      </Chart>
      <Chart low title="% of Time Spent by Downstream Service" legend={<><Leg c="#94c8fb" t="ad-server" cls="w-[65px]" /><Leg c="#2f8de0" t="ad-server-http-clie..." cls="w-[110px]" /><Leg c="#d2bff6" t="ad-server-mongodb" /><span className="ml-auto mr-[23px] h-[15px] w-[24px] rounded-[3px] border border-[#dfe2e7] flex items-center justify-center text-[#5b616c]">+37</span></>}>
        <ChartPct />
      </Chart>
    </div>
    <div className="h-[31px] pt-[2px] -ml-[13px] -mr-[11px] pl-[13px] flex border-b border-[#e8eaed]">
      <Ptab t="Setup Guidance" active w="w-[77px] mr-[25px]" />
      <Ptab t="Dashboards" w="w-[84px]" />
      <Ptab t="Definition" w="w-[73px]" />
      <Ptab t="Dependencies" w="w-[80px]" />
    </div>
    <div className="h-[41px] flex items-center text-[12px] text-[#3f4652]">Finish setting up your service</div>
    <div className="h-[22px] pb-[6px] flex items-center text-[10.3px] font-bold text-[#22262e] border-b border-[#e8eaed]">Recommended setup for this service</div>
    {setup.map((r, i) => (
      <SetupRow key={i} r={r} />
    ))}
    <div className="h-[35px] pt-[13px] text-[10.3px] font-bold text-[#22262e] border-b border-[#e8eaed]">Recommended telemetry</div>
    {telem.map((r, i) => (
      <SetupRow key={i} r={r} />
    ))}
  </div>
);

export default function App() {
  return (
    <div className="relative w-[1400px] h-[1062px] overflow-hidden flex bg-white [font-family:'Noto_Sans',sans-serif]">
      <Side />
      <Main />
      <Panel />
    </div>
  );
}
